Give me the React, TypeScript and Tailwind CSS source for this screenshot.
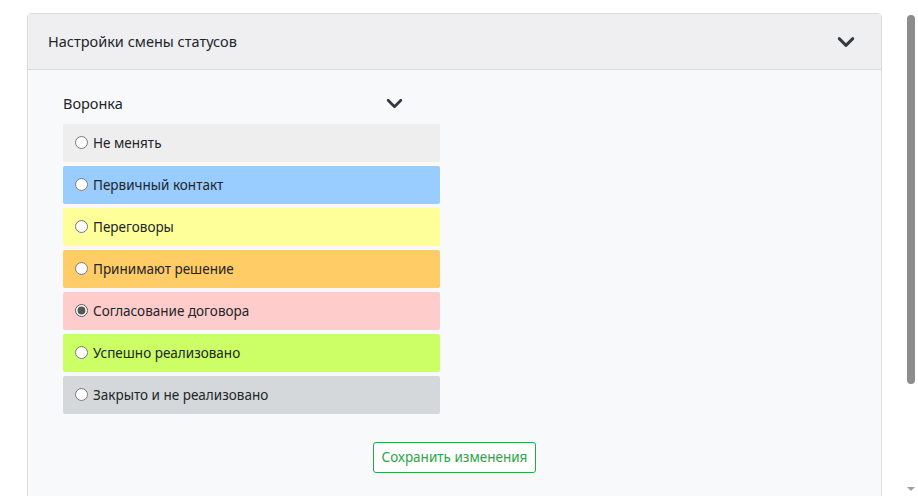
import { useState } from "react"

const statuses = [
  { name: "Не менять", bg: "bg-[#eeeeee]" },
  { name: "Первичный контакт", bg: "bg-[#99ccff]" },
  { name: "Переговоры", bg: "bg-[#ffff99]" },
  { name: "Принимают решение", bg: "bg-[#ffcc66]" },
  { name: "Согласование договора", bg: "bg-[#ffcccc]" },
  { name: "Успешно реализовано", bg: "bg-[#ccff66]" },
  { name: "Закрыто и не реализовано", bg: "bg-[#d5d8da]" },
]

function Chevron({ className }: { className?: string }) {
  return (
    <svg viewBox="0 0 16 10" className={className} fill="none" stroke="currentColor" strokeWidth="2.6" strokeLinecap="round" strokeLinejoin="round">
      <path d="M2 2l6 6 6-6" />
    </svg>
  )
}

export default function App() {
  const [selected, setSelected] = useState(4)

  return (
    <div className="flex h-[496px] w-[918px] overflow-hidden bg-white font-['Noto_Sans',sans-serif] text-[#212529]">
      <div className="flex-1 pl-[27px] pr-[21px] pt-[13px]">
        <div className="h-[500px] rounded-t border border-[#dcdcdc] bg-[#f8f9fa]">
          <div className="flex h-[56px] items-center justify-between border-b border-[#dcdcdc] bg-[#efeff1] pl-[20px] pr-[26px] text-[14.5px]">
            <span>Настройки смены статусов</span>
            <Chevron className="h-[12px] w-[18px] text-[#343a40]" />
          </div>
          <div className="pl-[35px] pt-[23px]">
            <div className="flex w-[377px] items-center justify-between pb-[9px] text-[14.5px]">
              <span>Воронка</span>
              <Chevron className="mr-[37px] h-[11px] w-[17px] text-[#343a40]" />
            </div>
            <div className="flex w-[377px] flex-col gap-[4px]">
              {statuses.map((s, i) => (
                <label key={s.name} className={`flex h-[38px] items-center gap-[5px] rounded-[2px] px-[12px] text-[13.5px] ${s.bg}`}>
                  <input type="radio" name="status" checked={selected === i} onChange={() => setSelected(i)} className="m-0 h-[13px] w-[13px] accent-[#555]" />
                  <span>{s.name}</span>
                </label>
              ))}
            </div>
          </div>
          <div className="flex justify-center pt-[28px]">
            <button className="h-[31px] rounded-[3px] border border-[#28a745] bg-white px-[8px] text-[13.5px] text-[#28a745]">
              Сохранить изменения
            </button>
          </div>
        </div>
      </div>
      <div className="flex w-[15px] flex-col items-center pt-[15px]">
        <div className="h-[369px] w-[8px] rounded-[4px] bg-[#8c8c8c]" />
        <div className="flex-1" />
        <div className="mb-[5px] h-0 w-0 border-l-[4px] border-r-[4px] border-t-[4px] border-l-transparent border-r-transparent border-t-[#a0a0a0]" />
      </div>
    </div>
  )
}
